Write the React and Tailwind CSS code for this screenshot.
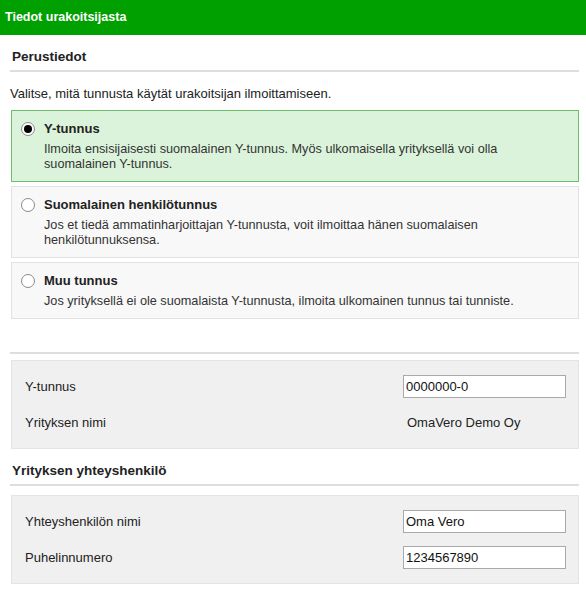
import React from 'react';

const options = [
  {
    title: 'Y-tunnus',
    text: 'Ilmoita ensisijaisesti suomalainen Y-tunnus. Myös ulkomaisella yrityksellä voi olla suomalainen Y-tunnus.',
    selected: true,
  },
  {
    title: 'Suomalainen henkilötunnus',
    text: 'Jos et tiedä ammatinharjoittajan Y-tunnusta, voit ilmoittaa hänen suomalaisen henkilötunnuksensa.',
  },
  {
    title: 'Muu tunnus',
    text: 'Jos yrityksellä ei ole suomalaista Y-tunnusta, ilmoita ulkomainen tunnus tai tunniste.',
  },
];

const Heading = ({ children, className = '' }) => (
  <div className={`pl-[2px] pb-[4px] border-b-2 border-[#dedede] ${className}`}>
    <h2 className="h-[18px] leading-[18px] text-[13.5px] font-bold text-[#222]">{children}</h2>
  </div>
);

const Radio = ({ checked }) => (
  <span className="mt-[1px] w-[14px] h-[14px] shrink-0 rounded-full border border-[#8a8a8a] bg-white flex items-center justify-center">
    {checked && <span className="w-[8px] h-[8px] rounded-full bg-black" />}
  </span>
);

const Option = ({ title, text, selected }) => (
  <div
    className={`ml-px pl-[9px] pr-[12px] pt-[10px] pb-[9px] border ${
      selected ? 'bg-[#dbf3da] border-[#6cbf6a]' : 'bg-[#f8f8f8] border-[#e2e2e2]'
    }`}
  >
    <div className="flex items-start gap-[9px]">
      <Radio checked={selected} />
      <div>
        <div className="h-[16px] leading-[16px] font-bold text-[#222]">{title}</div>
        <p className="mt-[5px] leading-[15px] text-[12.7px] text-[#333] pr-[40px]">{text}</p>
      </div>
    </div>
  </div>
);

const Row = ({ label, children }) => (
  <div className="flex items-center h-[23px]">
    <div className="w-[379px] text-[#222]">{label}</div>
    <div className="flex-1">{children}</div>
  </div>
);

const Input = ({ value }) => (
  <input
    readOnly
    value={value}
    className="w-[163px] h-[23px] border border-[#a9a9a9] bg-white px-[2px] text-[13px] text-[#111] outline-none"
    style={{ fontFamily: '"Liberation Sans", Arial, sans-serif' }}
  />
);

const Panel = ({ children, className = '' }) => (
  <div className={`ml-px pl-[13px] pr-[12px] py-[14px] bg-[#f0f0f0] border border-[#e4e4e4] flex flex-col gap-[13px] ${className}`}>
    {children}
  </div>
);

export default function App() {
  return (
    <div
      className="w-[586px] h-[592px] bg-white text-[13px] overflow-hidden"
      style={{ fontFamily: '"Liberation Sans", Arial, sans-serif' }}
    >
      <header className="h-[35px] bg-[#00a000] px-[5px] flex items-center">
        <h1 className="text-white font-bold text-[12.5px]">Tiedot urakoitsijasta</h1>
      </header>

      <main className="pl-[10px] pr-[7px]">
        <Heading className="pt-[13px]">Perustiedot</Heading>

        <p className="mt-[14px] leading-[15px] text-[#222]">
          Valitse, mitä tunnusta käytät urakoitsijan ilmoittamiseen.
        </p>

        <div className="mt-[9px] flex flex-col gap-[4px]">
          {options.map((o) => (
            <Option key={o.title} {...o} />
          ))}
        </div>

        <div className="mt-[33px] border-b-2 border-[#dedede]" />

        <Panel className="mt-[6px]">
          <Row label="Y-tunnus">
            <Input value="0000000-0" />
          </Row>
          <Row label="Yrityksen nimi">
            <span className="pl-[3px] text-[#222]">OmaVero Demo Oy</span>
          </Row>
        </Panel>

        <Heading className="pt-[13px]">Yrityksen yhteyshenkilö</Heading>

        <Panel className="mt-[9px]">
          <Row label="Yhteyshenkilön nimi">
            <Input value="Oma Vero" />
          </Row>
          <Row label="Puhelinnumero">
            <Input value="1234567890" />
          </Row>
        </Panel>
      </main>
    </div>
  );
}
